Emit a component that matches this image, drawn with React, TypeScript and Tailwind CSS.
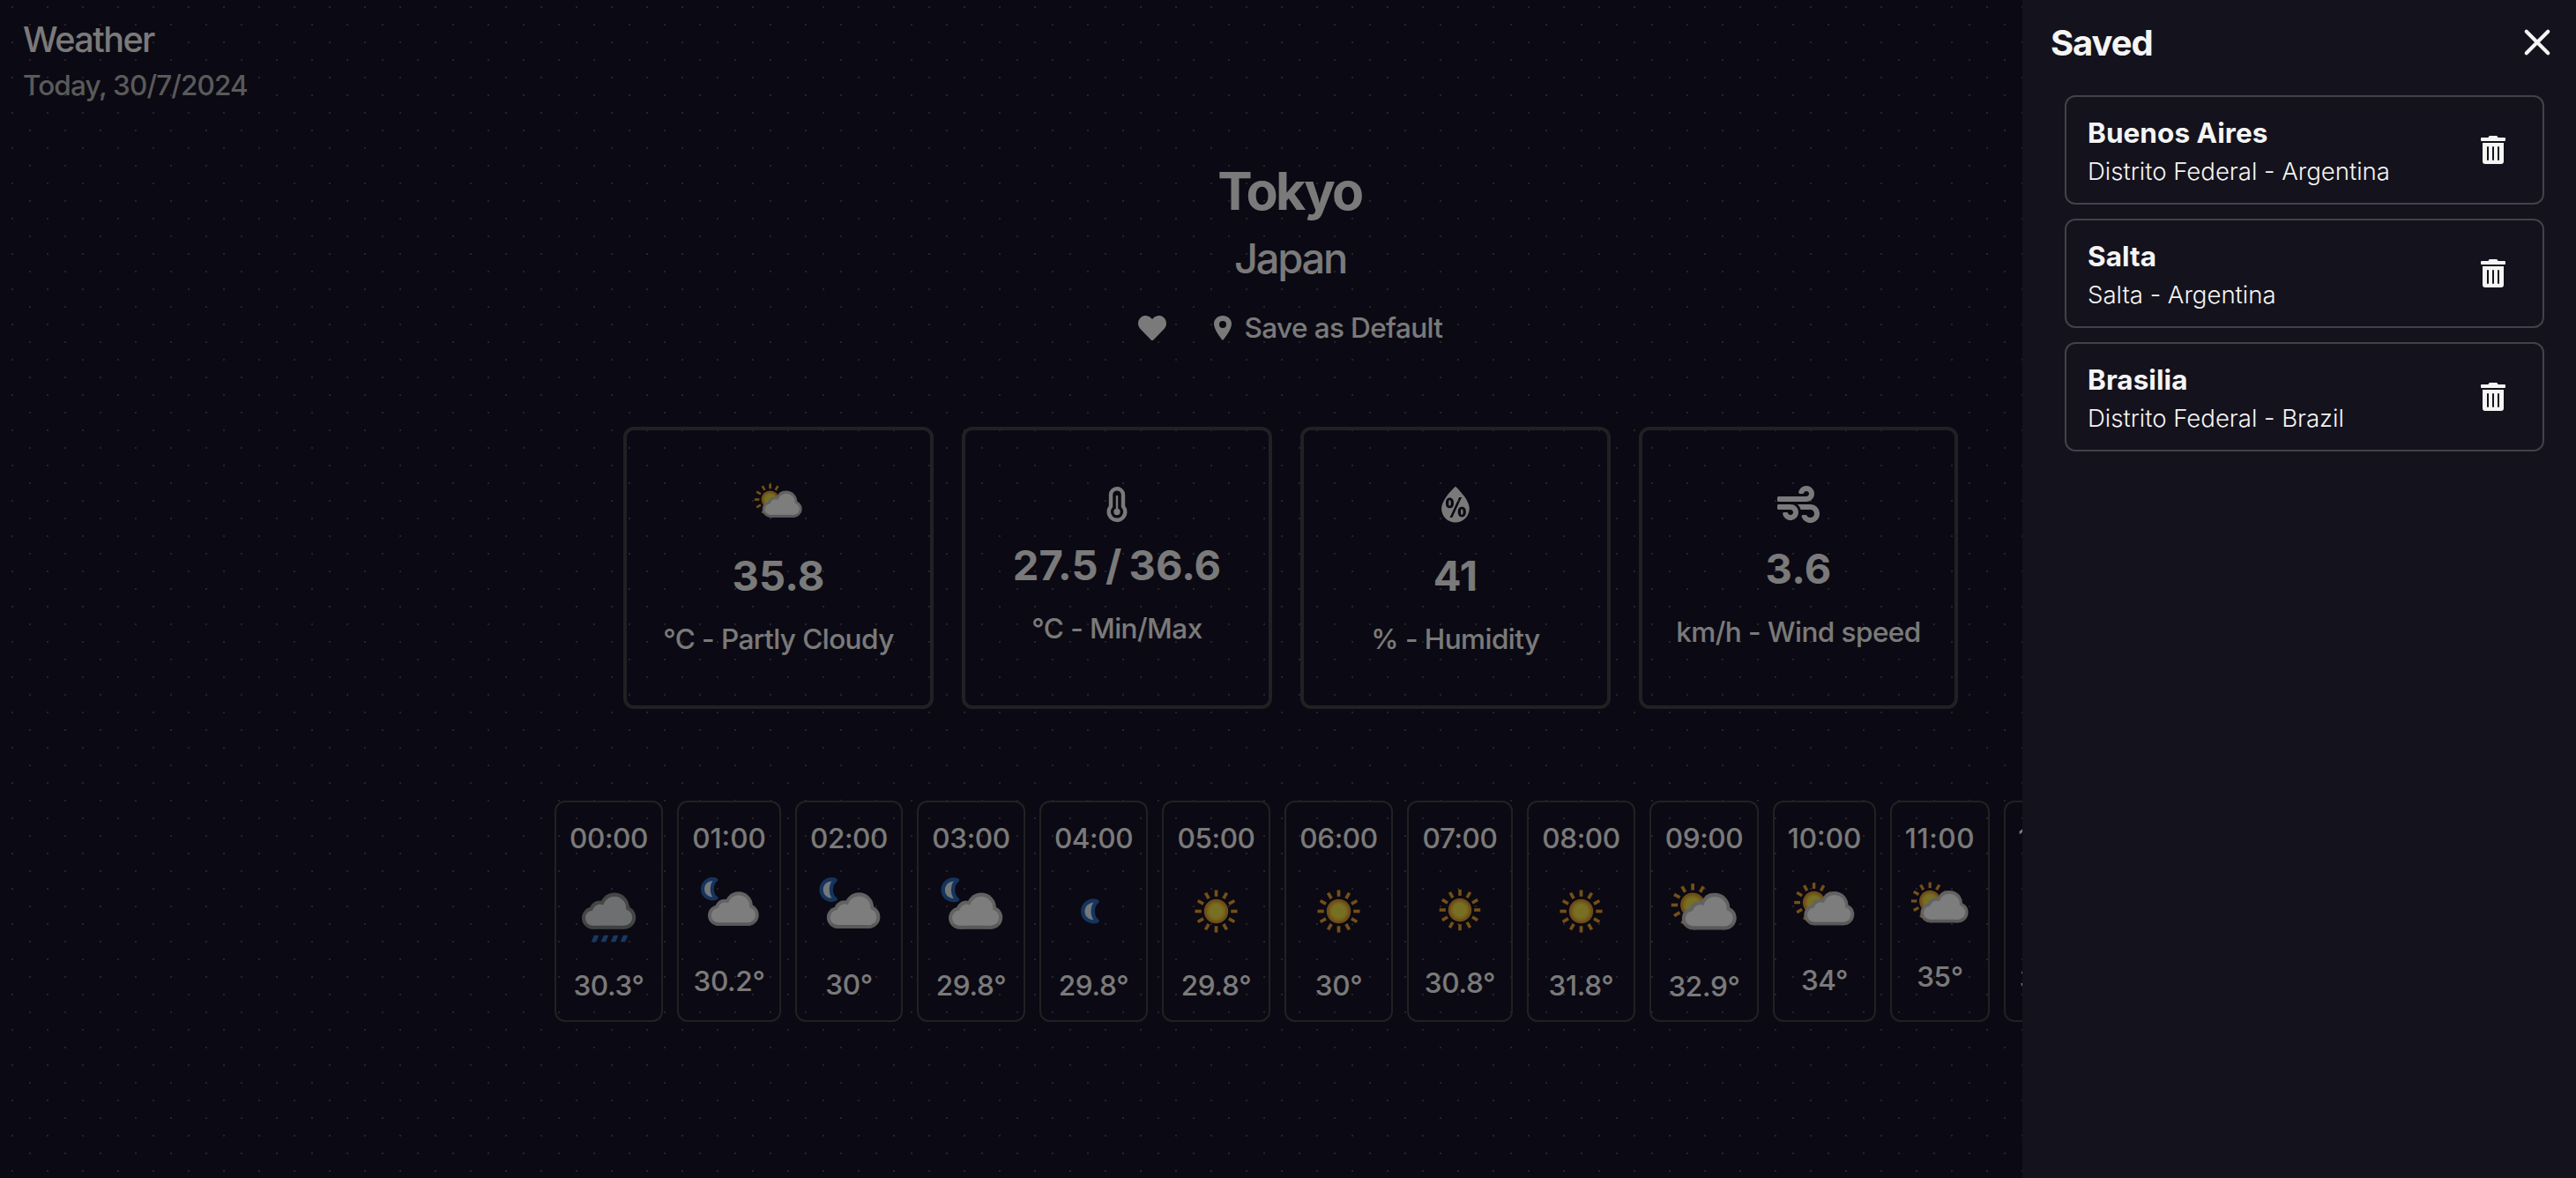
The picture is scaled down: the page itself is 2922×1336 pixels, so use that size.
import React from "react";
import { WiHumidity } from "react-icons/wi";
import { FaHeart, FaTrashAlt, FaWind } from "react-icons/fa";
import { IoLocationSharp, IoCloseOutline } from "react-icons/io5";

type Condition = "rain" | "cloudy-night" | "clear-night" | "sunny" | "cloudy-day";

function Cloud({ dx = 0, outer, inner, shade }: { dx?: number; outer: string; inner: string; shade: string }) {
  return (
    <g transform={`translate(${dx} 0)`}>
      <g fill={outer}>
        <circle cx="18.8" cy="37.6" r="9.2" />
        <circle cx="24.4" cy="31.8" r="8.6" />
        <circle cx="36.8" cy="29" r="12.4" />
        <circle cx="45" cy="37.2" r="9.6" />
        <rect x="18.8" y="34" width="26.2" height="12.8" />
      </g>
      <path
        d="M12 42.6h40.4c-2 2.8-4.5 4.2-7.4 4.2H18.8c-2.8 0-5.2-1.6-6.8-4.2z"
        fill={shade}
      />
      <g fill={inner}>
        <circle cx="18.8" cy="37.6" r="6.3" />
        <circle cx="24.8" cy="32.6" r="6.4" />
        <circle cx="36.8" cy="29.4" r="9.7" />
        <circle cx="44.8" cy="37.2" r="6.8" />
        <rect x="18.8" y="33" width="26" height="10.9" />
      </g>
    </g>
  );
}

function Sun({ cx, cy }: { cx: number; cy: number }) {
  return (
    <g>
      {Array.from({ length: 12 }, (_, i) => (
        <rect
          key={i}
          x={cx - 1.35}
          y={cy - 17.7}
          width="2.7"
          height="5.4"
          fill="#e8a030"
          transform={`rotate(${i * 30} ${cx} ${cy})`}
        />
      ))}
      <circle cx={cx} cy={cy} r="10.1" fill="#dc9a30" />
      <circle cx={cx} cy={cy} r="8" fill="#eac23c" />
      <circle cx={cx} cy={cy} r="6.2" fill="#eede44" />
    </g>
  );
}

function Moon({ x = 0, y = 0 }: { x?: number; y?: number }) {
  return (
    <path
      transform={`translate(${x} ${y})`}
      d="M20.6 6.1C15.8 9.6 15.8 18.7 20.6 22.2A8.7 8.7 0 1 1 20.6 6.1Z"
      fill="#e6f0f5"
      stroke="#2a68bc"
      strokeWidth="3.2"
      strokeLinejoin="round"
    />
  );
}

function WeatherIcon({ kind, className }: { kind: Condition; className?: string }) {
  return (
    <svg viewBox="0 0 64 64" className={className}>
      {kind === "rain" && (
        <>
          <Cloud outer="#8c8d8e" inner="#dcdfe1" shade="#7f8081" />
          {[0, 8, 16.2, 24.2].map((x) => (
            <path key={x} d={`M${19.8 + x} 52h4l-2.3 5.5h-4z`} fill="#2f72cc" />
          ))}
        </>
      )}
      {kind === "cloudy-night" && (
        <>
          <Moon />
          <Cloud dx={3.7} outer="#c4c4c4" inner="#fafafa" shade="#b2b2b2" />
        </>
      )}
      {kind === "clear-night" && <Moon x={14.4} y={17.8} />}
      {kind === "sunny" && <Sun cx={32} cy={32} />}
      {kind === "cloudy-day" && (
        <>
          <clipPath id="sun-visible">
            <path d="M0 0H38V24L20 37 14 46H0Z" />
          </clipPath>
          <g clipPath="url(#sun-visible)">
            <Sun cx={22.6} cy={26.5} />
          </g>
          <Cloud dx={4.1} outer="#c4c4c4" inner="#fafafa" shade="#b2b2b2" />
        </>
      )}
    </svg>
  );
}

function Thermometer({ className }: { className?: string }) {
  return (
    <svg viewBox="0 0 24 40" className={className} fill="none" stroke="currentColor">
      <path d="M5 9.2a7 7 0 0 1 14 0V22.4a9.3 9.3 0 1 1-14 0Z" strokeWidth="4.4" />
      <path d="M12 11v17" strokeWidth="2.4" strokeLinecap="round" />
      <circle cx="12" cy="28.5" r="3.7" fill="currentColor" stroke="none" />
    </svg>
  );
}

const stats = [
  {
    icon: <WeatherIcon kind="cloudy-day" className="mt-1 h-16 w-16" />,
    slot: "h-[81px]",
    width: "w-[352px]",
    value: "35.8",
    tracking: "tracking-[0.2px]",
    label: "°C - Partly Cloudy",
  },
  {
    icon: <Thermometer className="mt-4 h-10 w-6" />,
    slot: "h-[69px]",
    width: "w-[352px]",
    value: "27.5 / 36.6",
    tracking: "tracking-[0.1px] [word-spacing:-3px]",
    label: "°C - Min/Max",
  },
  {
    icon: <WiHumidity className="mt-1 h-16 w-16" />,
    slot: "h-[81px]",
    width: "w-[352px]",
    value: "41",
    tracking: "tracking-[0.2px]",
    label: "% - Humidity",
  },
  {
    icon: <FaWind className="mt-3 h-12 w-12" />,
    slot: "h-[73px]",
    width: "w-[362px]",
    value: "3.6",
    tracking: "tracking-[0.2px]",
    label: "km/h - Wind speed",
  },
];

const hours: { time: string; temp: string; kind: Condition; width: string; tracking?: string }[] = [
  { time: "00:00", temp: "30.3°", kind: "rain", width: "w-[123px]" },
  { time: "01:00", temp: "30.2°", kind: "cloudy-night", width: "w-[118px]", tracking: "tracking-[0px]" },
  { time: "02:00", temp: "30°", kind: "cloudy-night", width: "w-[122px]" },
  { time: "03:00", temp: "29.8°", kind: "cloudy-night", width: "w-[123px]" },
  { time: "04:00", temp: "29.8°", kind: "clear-night", width: "w-[123px]" },
  { time: "05:00", temp: "29.8°", kind: "sunny", width: "w-[123px]" },
  { time: "06:00", temp: "30°", kind: "sunny", width: "w-[123px]" },
  { time: "07:00", temp: "30.8°", kind: "sunny", width: "w-[120px]" },
  { time: "08:00", temp: "31.8°", kind: "sunny", width: "w-[123px]" },
  { time: "09:00", temp: "32.9°", kind: "cloudy-day", width: "w-[124px]" },
  { time: "10:00", temp: "34°", kind: "cloudy-day", width: "w-[117px]", tracking: "tracking-[0px]" },
  { time: "11:00", temp: "35°", kind: "cloudy-day", width: "w-[113px]", tracking: "tracking-[0.6px]" },
  { time: "12:00", temp: "35.8°", kind: "cloudy-day", width: "w-[115px]", tracking: "tracking-[0px]" },
];

const saved = [
  { city: "Buenos Aires", region: "Distrito Federal - Argentina" },
  { city: "Salta", region: "Salta - Argentina" },
  { city: "Brasilia", region: "Distrito Federal - Brazil" },
];

function Drawer() {
  return (
    <aside className="absolute inset-y-0 right-0 w-[628px] bg-[#14121c] text-[#f5f5f4]">
      <header className="flex h-[108px] items-start justify-between pl-8 pr-4">
        <h2 className="pt-[21px] text-[40px] leading-[56px] font-bold tracking-[-1.1px]">Saved</h2>
        <button className="pt-5" aria-label="Close">
          <IoCloseOutline className="h-14 w-14 [&_path]:[stroke-width:38px]" />
        </button>
      </header>
      <ul className="flex flex-col gap-4 pl-12 pr-9">
        {saved.map((s) => (
          <li
            key={s.city}
            className="flex h-[124px] items-center justify-between rounded-[12px] border-2 border-[#434148] pl-6 pr-10"
          >
            <div className="flex flex-col">
              <span className="text-[31.5px] leading-[48px] font-bold tracking-[0.05px]">{s.city}</span>
              <span className="text-[27.6px] leading-[38px] font-light tracking-[-0.03px]">{s.region}</span>
            </div>
            <FaTrashAlt className="h-8 w-8" />
          </li>
        ))}
      </ul>
    </aside>
  );
}

export default function App() {
  return (
    <div className="relative h-[1336px] w-full overflow-hidden bg-[#161226] bg-[radial-gradient(circle,#4a4955_1px,transparent_1px),radial-gradient(circle,#4a4955_1px,transparent_1px)] bg-[length:40px_40px] [background-position:-6px_-12px,14px_8px] font-['Inter',sans-serif] font-[450] text-[#f5f5f4]">
      <header className="flex h-[181px] flex-col pl-[26px] pt-[17px]">
        <h1 className="text-[39.5px] leading-[56px] tracking-[-1.5px]">Weather</h1>
        <p className="text-[31.5px] leading-[48px] tracking-[-0.9px] text-[#b4b4b4]">Today, 30/7/2024</p>
      </header>

      <main className="flex flex-col items-center pl-[6px]">
        <h2 className="-ml-[2px] text-[59px] leading-[72px] font-bold tracking-[-2.6px]">Tokyo</h2>
        <h3 className="-ml-[1px] mt-2 text-[47px] leading-[64px] tracking-[-2.2px]">Japan</h3>
        <div className="mt-[23px] flex h-12 items-center">
          <FaHeart className="h-8 w-8" />
          <div className="ml-12 flex items-center gap-2">
            <IoLocationSharp className="h-8 w-8" />
            <span className="text-[31.5px] leading-[48px] tracking-[-0.6px]">Save as Default</span>
          </div>
        </div>

        <section className="mt-[88px] flex gap-8">
          {stats.map((s) => (
            <div
              key={s.label}
              className={`flex h-80 flex-col items-center rounded-[12px] border-4 border-[#434246] pt-12 ${s.width}`}
            >
              <div className={`flex shrink-0 items-start ${s.slot}`}>{s.icon}</div>
              <span className={`text-[47px] leading-[72px] font-bold whitespace-nowrap ${s.tracking}`}>{s.value}</span>
              <span className="mt-3 text-[31.5px] leading-[48px] tracking-[-0.55px] whitespace-nowrap">{s.label}</span>
            </div>
          ))}
        </section>

        <section className="mt-[104px] flex w-[1670px] gap-4 overflow-hidden">
          {hours.map((h) => (
            <div
              key={h.time}
              className={`flex h-[251px] shrink-0 flex-col items-center rounded-[12px] border-2 border-[#434246] px-4 pt-[17px] ${h.width}`}
            >
              <span className={`text-[31.5px] leading-[48px] ${h.tracking ?? "tracking-[-0.4px]"}`}>{h.time}</span>
              <WeatherIcon kind={h.kind} className="mb-4 mt-[15px] aspect-square w-full shrink-0" />
              <span className="pt-px text-[31.5px] leading-[48px] tracking-[-0.3px]">{h.temp}</span>
            </div>
          ))}
        </section>
      </main>

      <div className="absolute inset-0 bg-black/50" />
      <Drawer />
    </div>
  );
}
